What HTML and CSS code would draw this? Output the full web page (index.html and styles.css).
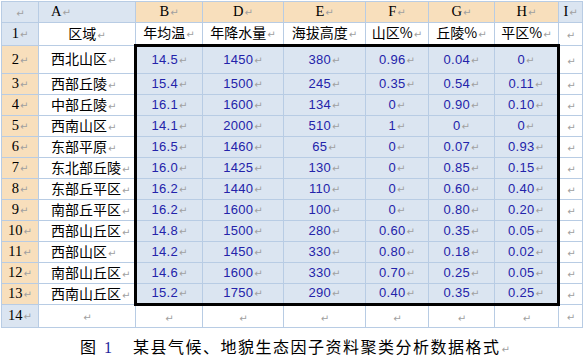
FILE: index.html
```html
<!DOCTYPE html>
<html lang="zh">
<head>
<meta charset="utf-8">
<title>某县气候、地貌生态因子资料聚类分析数据格式</title>
<link rel="stylesheet" href="styles.css">
</head>
<body>
<div class="page">
<table class="sheet">
<colgroup>
<col class="c-rh"><col class="c-a"><col class="c-b"><col class="c-d"><col class="c-e"><col class="c-f"><col class="c-g"><col class="c-h"><col class="c-i">
</colgroup>
<tr class="r-hdr">
<td class="hb"><i class="m">↵</i></td>
<td class="hb colname left">A<i class="m">↵</i></td>
<td class="ho colname">B<i class="m">↵</i></td>
<td class="ho colname">D<i class="m">↵</i></td>
<td class="ho colname">E<i class="m">↵</i></td>
<td class="ho colname">F<i class="m">↵</i></td>
<td class="ho colname">G<i class="m">↵</i></td>
<td class="ho colname">H<i class="m">↵</i></td>
<td class="hb colname">I<i class="m">↵</i></td>
</tr>
<tr class="r-1">
<td class="hb rn">1<i class="m">↵</i></td>
<td class="tx">区域<i class="m">↵</i></td>
<td class="tx">年均温<i class="m">↵</i></td>
<td class="tx">年降水量<i class="m">↵</i></td>
<td class="tx">海拔高度<i class="m">↵</i></td>
<td class="tx">山区%<i class="m">↵</i></td>
<td class="tx">丘陵%<i class="m">↵</i></td>
<td class="tx">平区%<i class="m">↵</i></td>
<td><i class="m">↵</i></td>
</tr>
<tr class="r-2">
<td class="ho rn">2<i class="m">↵</i></td>
<td class="tx left">西北山区<i class="m">↵</i></td>
<td class="num st sl">14.5<i class="m">↵</i></td>
<td class="num st">1450<i class="m">↵</i></td>
<td class="num st">380<i class="m">↵</i></td>
<td class="num st">0.96<i class="m">↵</i></td>
<td class="num st">0.04<i class="m">↵</i></td>
<td class="num st sr">0<i class="m">↵</i></td>
<td><i class="m">↵</i></td>
</tr>
<tr class="r-n">
<td class="ho rn">3<i class="m">↵</i></td>
<td class="tx left">西部丘陵<i class="m">↵</i></td>
<td class="num sl">15.4<i class="m">↵</i></td>
<td class="num">1500<i class="m">↵</i></td>
<td class="num">245<i class="m">↵</i></td>
<td class="num">0.35<i class="m">↵</i></td>
<td class="num">0.54<i class="m">↵</i></td>
<td class="num sr">0.11<i class="m">↵</i></td>
<td><i class="m">↵</i></td>
</tr>
<tr class="r-n">
<td class="ho rn">4<i class="m">↵</i></td>
<td class="tx left">中部丘陵<i class="m">↵</i></td>
<td class="num sl">16.1<i class="m">↵</i></td>
<td class="num">1600<i class="m">↵</i></td>
<td class="num">134<i class="m">↵</i></td>
<td class="num">0<i class="m">↵</i></td>
<td class="num">0.90<i class="m">↵</i></td>
<td class="num sr">0.10<i class="m">↵</i></td>
<td><i class="m">↵</i></td>
</tr>
<tr class="r-n">
<td class="ho rn">5<i class="m">↵</i></td>
<td class="tx left">西南山区<i class="m">↵</i></td>
<td class="num sl">14.1<i class="m">↵</i></td>
<td class="num">2000<i class="m">↵</i></td>
<td class="num">510<i class="m">↵</i></td>
<td class="num">1<i class="m">↵</i></td>
<td class="num">0<i class="m">↵</i></td>
<td class="num sr">0<i class="m">↵</i></td>
<td><i class="m">↵</i></td>
</tr>
<tr class="r-n">
<td class="ho rn">6<i class="m">↵</i></td>
<td class="tx left">东部平原<i class="m">↵</i></td>
<td class="num sl">16.5<i class="m">↵</i></td>
<td class="num">1460<i class="m">↵</i></td>
<td class="num">65<i class="m">↵</i></td>
<td class="num">0<i class="m">↵</i></td>
<td class="num">0.07<i class="m">↵</i></td>
<td class="num sr">0.93<i class="m">↵</i></td>
<td><i class="m">↵</i></td>
</tr>
<tr class="r-n">
<td class="ho rn">7<i class="m">↵</i></td>
<td class="tx left">东北部丘陵<i class="m">↵</i></td>
<td class="num sl">16.0<i class="m">↵</i></td>
<td class="num">1425<i class="m">↵</i></td>
<td class="num">130<i class="m">↵</i></td>
<td class="num">0<i class="m">↵</i></td>
<td class="num">0.85<i class="m">↵</i></td>
<td class="num sr">0.15<i class="m">↵</i></td>
<td><i class="m">↵</i></td>
</tr>
<tr class="r-n">
<td class="ho rn">8<i class="m">↵</i></td>
<td class="tx left">东部丘平区<i class="m">↵</i></td>
<td class="num sl">16.2<i class="m">↵</i></td>
<td class="num">1440<i class="m">↵</i></td>
<td class="num">110<i class="m">↵</i></td>
<td class="num">0<i class="m">↵</i></td>
<td class="num">0.60<i class="m">↵</i></td>
<td class="num sr">0.40<i class="m">↵</i></td>
<td><i class="m">↵</i></td>
</tr>
<tr class="r-n">
<td class="ho rn">9<i class="m">↵</i></td>
<td class="tx left">南部丘平区<i class="m">↵</i></td>
<td class="num sl">16.2<i class="m">↵</i></td>
<td class="num">1600<i class="m">↵</i></td>
<td class="num">100<i class="m">↵</i></td>
<td class="num">0<i class="m">↵</i></td>
<td class="num">0.80<i class="m">↵</i></td>
<td class="num sr">0.20<i class="m">↵</i></td>
<td><i class="m">↵</i></td>
</tr>
<tr class="r-n">
<td class="ho rn">10<i class="m">↵</i></td>
<td class="tx left">西部山丘区<i class="m">↵</i></td>
<td class="num sl">14.8<i class="m">↵</i></td>
<td class="num">1500<i class="m">↵</i></td>
<td class="num">280<i class="m">↵</i></td>
<td class="num">0.60<i class="m">↵</i></td>
<td class="num">0.35<i class="m">↵</i></td>
<td class="num sr">0.05<i class="m">↵</i></td>
<td><i class="m">↵</i></td>
</tr>
<tr class="r-n">
<td class="ho rn">11<i class="m">↵</i></td>
<td class="tx left">西部山区<i class="m">↵</i></td>
<td class="num sl">14.2<i class="m">↵</i></td>
<td class="num">1450<i class="m">↵</i></td>
<td class="num">330<i class="m">↵</i></td>
<td class="num">0.80<i class="m">↵</i></td>
<td class="num">0.18<i class="m">↵</i></td>
<td class="num sr">0.02<i class="m">↵</i></td>
<td><i class="m">↵</i></td>
</tr>
<tr class="r-n">
<td class="ho rn">12<i class="m">↵</i></td>
<td class="tx left">南部山丘区<i class="m">↵</i></td>
<td class="num sl">14.6<i class="m">↵</i></td>
<td class="num">1600<i class="m">↵</i></td>
<td class="num">330<i class="m">↵</i></td>
<td class="num">0.70<i class="m">↵</i></td>
<td class="num">0.25<i class="m">↵</i></td>
<td class="num sr">0.05<i class="m">↵</i></td>
<td><i class="m">↵</i></td>
</tr>
<tr class="r-13">
<td class="ho rn">13<i class="m">↵</i></td>
<td class="tx left">西南山丘区<i class="m">↵</i></td>
<td class="num sl sb">15.2<i class="m">↵</i></td>
<td class="num sb">1750<i class="m">↵</i></td>
<td class="num sb">290<i class="m">↵</i></td>
<td class="num sb">0.40<i class="m">↵</i></td>
<td class="num sb">0.35<i class="m">↵</i></td>
<td class="num sr sb">0.25<i class="m">↵</i></td>
<td><i class="m">↵</i></td>
</tr>
<tr class="r-14">
<td class="hb rn">14<i class="m">↵</i></td>
<td><i class="m">↵</i></td>
<td><i class="m">↵</i></td>
<td><i class="m">↵</i></td>
<td><i class="m">↵</i></td>
<td><i class="m">↵</i></td>
<td><i class="m">↵</i></td>
<td><i class="m">↵</i></td>
<td><i class="m">↵</i></td>
</tr>
</table>
<p class="caption"><span class="fig">图</span><span class="fignum">1</span><span class="captext">某县气候、地貌生态因子资料聚类分析数据格式</span><i class="m cm">↵</i></p>
</div>
</body>
</html>
```

FILE: styles.css
```css
html, body {
  margin: 0;
  padding: 0;
  background: #ffffff;
}

body {
  font-family: "Noto Sans CJK SC", "Noto Sans", sans-serif;
  color: #000;
}

.page {
  padding: 1px 0 0 1px;
}

.sheet {
  border-collapse: collapse;
  table-layout: fixed;
  width: 581px;
}

.c-rh { width: 37px; }
.c-a { width: 97px; }
.c-b { width: 67px; }
.c-d { width: 81px; }
.c-e { width: 82px; }
.c-f { width: 63px; }
.c-g { width: 66px; }
.c-h { width: 64px; }
.c-i { width: 24px; }

.sheet td {
  border: 1px solid #b8cce4;
  padding: 0;
  text-align: center;
  vertical-align: middle;
  white-space: nowrap;
  overflow: hidden;
  background: #ffffff;
  line-height: 14px;
}

.r-hdr td { height: 20px; }
.r-1 td { height: 21px; }
.r-2 td { height: 26px; }
.r-n td { height: 20px; }
.r-13 td { height: 19px; }
.r-14 td { height: 21px; }

.hb { background: #dbe5f1 !important; }
.ho { background: #f8dfbc !important; }

.colname,
.rn {
  font-family: "Liberation Serif", "Times New Roman", serif;
  font-size: 14.5px;
}

.tx {
  font-size: 14px;
}

.left {
  text-align: left !important;
  padding-left: 12px !important;
}

.num {
  background: #dbe5f1 !important;
  color: #2323aa;
  font-family: "Liberation Sans", Arial, sans-serif;
  font-size: 13px;
  letter-spacing: 0.3px;
}

/* selection outline around B2:H13 */
.sheet td.st { border-top: 3px solid #000; }
.sheet td.sb { border-bottom: 3px solid #000; }
.sheet td.sl { border-left: 3px solid #000; }
.sheet td.sr { border-right: 3px solid #000; }

.m {
  font-style: normal;
  font-family: "DejaVu Sans", sans-serif;
  font-size: 10px;
  color: #a0a0a0;
  margin-left: 1px;
  letter-spacing: 0;
}

.caption {
  margin: 8px 0 0 0;
  padding-left: 79px;
  font-size: 16px;
  line-height: 20px;
  white-space: nowrap;
}

.fignum {
  font-family: "Liberation Serif", "Times New Roman", serif;
  color: #1c1c9c;
  margin-left: 8px;
}

.captext {
  margin-left: 21px;
  letter-spacing: 1.5px;
}

.cm {
  font-size: 10px;
}
```
